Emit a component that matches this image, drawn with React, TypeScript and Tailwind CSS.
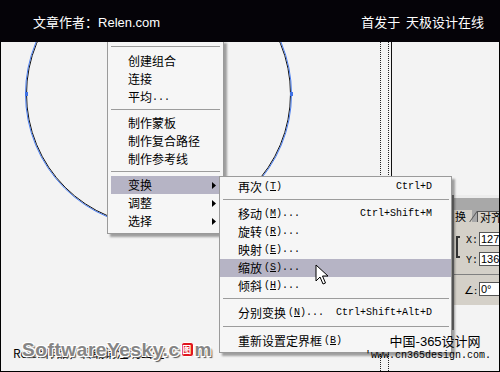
import React from "react";

const cjk = "font-['Noto_Sans_CJK_SC','Noto_Sans',sans-serif]";
const mono = "font-['Liberation_Mono','DejaVu_Sans_Mono',monospace]";

function Sep({ className }: { className: string }) {
  return (
    <div className={className}>
      <div className="h-px bg-[#9c9c9c]" />
    </div>
  );
}

function Mn({ k, dots }: { k: string; dots?: boolean }) {
  return (
    <span className={`${mono} text-[10px] ml-[2px]`}>
      (<span className="underline">{k}</span>){dots ? "..." : ""}
    </span>
  );
}

function SubItem({
  label,
  k,
  dots,
  shortcut,
  active,
}: {
  label: string;
  k: string;
  dots?: boolean;
  shortcut?: string;
  active?: boolean;
}) {
  return (
    <div
      className={`h-[18px] flex items-center justify-between pl-[18px] pr-[19px] ${
        active ? "bg-[#b6b4c5]" : ""
      }`}
    >
      <span className="flex items-center leading-none">
        <span>{label}</span>
        <Mn k={k} dots={dots} />
      </span>
      {shortcut && <span className={`${mono} text-[10px] leading-none`}>{shortcut}</span>}
    </div>
  );
}

function Cursor() {
  return (
    <svg width="14" height="22" viewBox="0 0 14 22" className="absolute left-[314px] top-[222px]">
      <path
        d="M1 1 L1 17 L5 13 L8 20 L10.5 19 L7.5 12 L13 12 Z"
        fill="#fff"
        stroke="#000"
        strokeWidth="1"
        strokeLinejoin="miter"
      />
    </svg>
  );
}

export default function App() {
  return (
    <div className={`w-[500px] h-[372px] bg-black ${cjk} text-black overflow-hidden`}>
      {/* header */}
      <div className="h-[42px] bg-[#050308] flex items-center justify-between pl-[33px] pr-[16px] pt-[2px] text-white text-[13px]">
        <span>
          文章作者：<span className="font-['Liberation_Sans',sans-serif] text-[13px]">Relen.com</span>
        </span>
        <span>首发于&nbsp; 天极设计在线</span>
      </div>

      {/* canvas */}
      <div className="relative h-[330px] bg-[#f3f3f3] border-l border-r border-b border-black overflow-hidden">
        {/* circle path */}
        <svg width="500" height="330" className="absolute left-[-1px] top-0">
          <circle cx="158.5" cy="52" r="132" fill="none" stroke="#111" strokeWidth="1" />
          <circle cx="158.5" cy="52" r="133" fill="none" stroke="#4a7ef0" strokeWidth="1" />
          <rect x="25" y="50" width="3" height="4" fill="#3f72e6" />
          <rect x="290" y="50" width="3" height="4" fill="#3f72e6" />
          {/* guides */}
          <line x1="380.5" y1="0" x2="380.5" y2="330" stroke="#222" strokeDasharray="1 1" />
          <line x1="388.5" y1="0" x2="388.5" y2="330" stroke="#222" strokeDasharray="1 1" />
          <line x1="391.5" y1="0" x2="391.5" y2="140" stroke="#111" />
        </svg>

        {/* right palette */}
        <div className="absolute left-[451px] top-[153px] w-[2px] h-[135px] bg-[#808080]" />
        <div className="absolute left-[453px] top-[153px] w-[46px] h-[110px] bg-[#d4d0c8] flex flex-col overflow-hidden">
          <div className="h-[3px] bg-[#ececec]" />
          <div className="h-[12px] bg-[#a8a8a8]" />
          <div className="h-[12px] flex items-end bg-[#a8a8a8] text-[11px] leading-none whitespace-nowrap">
            <div className="h-[12px] w-[18px] shrink-0 bg-[#d4d0c8] pl-[1px] flex items-center">换</div>
            <div className="h-[11px] w-0 shrink-0 border-l border-[#555] -skew-x-[35deg] ml-[1px]" />
            <div className="h-[11px] w-[40px] shrink-0 ml-[3px] bg-[#d4d0c8] border-t border-l border-[#555] pl-[2px] flex items-center">
              对齐
            </div>
          </div>
          <div className="flex-1 relative">
            <div className="absolute left-[2px] top-[14px] w-[4px] h-[22px] border-l-2 border-y-2 border-[#333]" />
            <div className={`absolute left-[12px] top-[11px] ${mono} text-[10px]`}>X:</div>
            <div className="absolute left-[25px] top-[10px] w-[22px] h-[14px] bg-white border border-[#555] text-[11px] leading-[12px] pl-[1px] font-['Liberation_Sans',sans-serif]">
              127
            </div>
            <div className={`absolute left-[12px] top-[31px] ${mono} text-[10px]`}>Y:</div>
            <div className="absolute left-[25px] top-[30px] w-[22px] h-[14px] bg-white border border-[#555] text-[11px] leading-[12px] pl-[1px] font-['Liberation_Sans',sans-serif]">
              136
            </div>
            <div className="absolute left-0 right-0 top-[52px] h-px bg-[#808080]" />
            <div className="absolute left-[10px] top-[61px] text-[11px] font-['DejaVu_Sans',sans-serif]">∠:</div>
            <div className="absolute left-[25px] top-[60px] w-[22px] h-[14px] bg-white border border-[#555] text-[11px] leading-[12px] pl-[1px] font-['Liberation_Sans',sans-serif]">
              0°
            </div>
          </div>
        </div>

        {/* main context menu */}
        <div className="absolute left-[106px] top-[-2px] w-[117px] pb-[3px] bg-[#f6f6f6] border border-[#9a9a9a] shadow-[3px_3px_2px_rgba(0,0,0,0.35)] text-[12px]">
          <Sep className="pt-[5px] pb-[5px] px-[3px]" />
          <div className="h-[18px] flex items-center pl-[20px]">创建组合</div>
          <div className="h-[18px] flex items-center pl-[20px]">连接</div>
          <div className="h-[18px] flex items-center pl-[20px]">
            平均<span className={`${mono} text-[10px]`}>...</span>
          </div>
          <Sep className="pt-[3px] pb-[4px] px-[3px]" />
          <div className="h-[18px] flex items-center pl-[20px]">制作蒙板</div>
          <div className="h-[18px] flex items-center pl-[20px]">制作复合路径</div>
          <div className="h-[18px] flex items-center pl-[20px]">制作参考线</div>
          <Sep className="pt-[3px] pb-[4px] px-[3px]" />
          {[
            { t: "变换", a: true },
            { t: "调整", a: false },
            { t: "选择", a: false },
          ].map((r) => (
            <div key={r.t} className="px-[3px]">
              <div
                className={`h-[18px] flex items-center justify-between pl-[17px] pr-[4px] ${
                  r.a ? "bg-[#b6b4c5]" : ""
                }`}
              >
                <span>{r.t}</span>
                <svg width="4" height="7" viewBox="0 0 4 7">
                  <path d="M0 0 L4 3.5 L0 7 Z" fill="#000" />
                </svg>
              </div>
            </div>
          ))}
        </div>

        {/* transform submenu */}
        <div className="absolute left-[218px] top-[134px] w-[233px] pt-px pb-[2px] bg-[#f6f6f6] border border-[#9a9a9a] shadow-[3px_3px_2px_rgba(0,0,0,0.35)] text-[12px]">
          <SubItem label="再次" k="T" shortcut="Ctrl+D" />
          <Sep className="pt-[3px] pb-[5px] pl-[3px] pr-[2px]" />
          <SubItem label="移动" k="M" dots shortcut="Ctrl+Shift+M" />
          <SubItem label="旋转" k="R" dots />
          <SubItem label="映射" k="E" dots />
          <SubItem label="缩放" k="S" dots active />
          <SubItem label="倾斜" k="H" dots />
          <Sep className="pt-[3px] pb-[5px] pl-[3px] pr-[2px]" />
          <SubItem label="分别变换" k="N" dots shortcut="Ctrl+Shift+Alt+D" />
          <Sep className="pt-[4px] pb-[5px] pl-[3px] pr-[2px]" />
          <SubItem label="重新设置定界框" k="B" />
        </div>

        <Cursor />

        {/* bottom credits */}
        <div className="absolute left-[364px] top-[292px] flex flex-col items-center">
          <div className="text-[13px] leading-[14px] pl-[14px]">
            中国-<span className="font-['Liberation_Sans',sans-serif]">365</span>设计网
          </div>
          <div className={`${mono} text-[10px] leading-[12px] mt-[1px]`}>'www.cn365design.com.</div>
        </div>

        {/* watermark line */}
        <div className="absolute left-[12px] top-[302px] text-[12px] text-black">Relen作品，转载请注明出处</div>
        <div className="absolute left-[21px] top-[298px] flex items-center font-['Liberation_Sans',sans-serif] font-bold text-[19px] leading-none text-[#858585] tracking-[0.6px] [text-shadow:1px_1px_0_#fff,-1px_-1px_0_#fff,1px_-1px_0_#fff,-1px_1px_0_#fff,2px_2px_1px_#555]">
          <span>SoftwareYesky.c</span>
          <span className="w-[13px] h-[15px] rounded-[3px] bg-[#e0141e] border border-white mx-[1px] flex items-center justify-center text-[9px] text-white font-['Noto_Sans_CJK_SC',sans-serif] [text-shadow:none]">
            图
          </span>
          <span>m</span>
        </div>
      </div>
    </div>
  );
}
